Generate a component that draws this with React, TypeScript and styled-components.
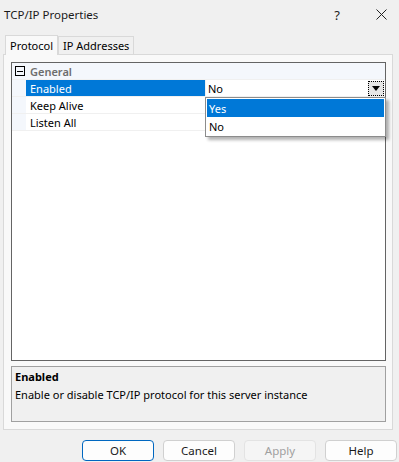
import React from "react";
import styled, { createGlobalStyle } from "styled-components";

const Global = createGlobalStyle`
  html, body { margin: 0; padding: 0; background: #f0f0f0; overflow: hidden; }
  * { box-sizing: border-box; }
  body { font-family: "Noto Sans", "Open Sans", sans-serif; font-size: 11px; color: #000; }
`;

const Window = styled.div`
  width: 399px;
  height: 462px;
  background: #f0f0f0;
  display: flex;
  flex-direction: column;
`;

const TitleBar = styled.div`
  height: 29px;
  display: flex;
  align-items: center;
  padding-left: 4px;
`;

const Title = styled.div`
  flex: 1;
  font-size: 11.5px;
  color: #1a1a1a;
`;

const TitleButton = styled.div<{ $w: number }>`
  width: ${(p) => p.$w}px;
  height: 29px;
  display: flex;
  align-items: center;
  justify-content: center;
  font-size: 13px;
  color: #222;
`;

const TabStrip = styled.div`
  display: flex;
  align-items: flex-end;
  padding-left: 5px;
  height: 25px;
`;

const Tab = styled.div<{ $active?: boolean }>`
  height: ${(p) => (p.$active ? 20 : 18)}px;
  padding: 0 ${(p) => (p.$active ? 4 : 4)}px;
  display: flex;
  align-items: center;
  border: 1px solid #d9d9d9;
  border-bottom: none;
  background: ${(p) => (p.$active ? "#f9f9f9" : "#f0f0f0")};
  margin-bottom: ${(p) => (p.$active ? -1 : 0)}px;
  position: relative;
  z-index: ${(p) => (p.$active ? 1 : 0)};
`;

const Panel = styled.div`
  margin: 0 6px 0 3px;
  height: 376px;
  border: 1px solid #d9d9d9;
  background: #f9f9f9;
  padding: 7px 6px 7px 7px;
  display: flex;
  flex-direction: column;
  gap: 5px;
`;

const Grid = styled.div`
  position: relative;
  height: 300px;
  border: 1px solid #646464;
  background: #fff;
`;

const Row = styled.div`
  display: flex;
  height: 17px;
  border-bottom: 1px solid #f0f0f0;
`;

const Gutter = styled.div`
  width: 14px;
  background: #f4f7fc;
  display: flex;
  align-items: center;
  justify-content: center;
`;

const Expander = styled.div`
  width: 10px;
  height: 10px;
  border: 1px solid #000;
  display: flex;
  align-items: center;
  justify-content: center;
  margin-left: 2px;
  &::after {
    content: "";
    width: 6px;
    height: 1px;
    background: #000;
  }
`;

const Category = styled.div`
  flex: 1;
  background: #f4f7fc;
  color: #6d6d6d;
  font-weight: 600;
  padding-left: 4px;
  display: flex;
  align-items: center;
`;

const Label = styled.div<{ $selected?: boolean }>`
  width: 180px;
  padding-left: 4px;
  display: flex;
  align-items: center;
  background: ${(p) => (p.$selected ? "#0078d7" : "#fff")};
  color: ${(p) => (p.$selected ? "#fff" : "#000")};
  border-right: 1px solid #f0f0f0;
`;

const Value = styled.div`
  flex: 1;
  padding-left: 2px;
  display: flex;
  align-items: center;
  justify-content: space-between;
`;

const DropButton = styled.div`
  width: 16px;
  height: 15px;
  margin-right: 1px;
  border: 1px dotted #000;
  background: #e6e6e6;
  display: flex;
  align-items: center;
  justify-content: center;
  &::after {
    content: "";
    border-left: 4px solid transparent;
    border-right: 4px solid transparent;
    border-top: 5px solid #000;
  }
`;

const DropList = styled.div`
  position: absolute;
  left: 193px;
  top: 34px;
  width: 181px;
  height: 40px;
  background: #fff;
  border: 1px solid #8c8c8c;
  padding: 1px;
  box-shadow: 3px 3px 3px rgba(0, 0, 0, 0.3);
  z-index: 2;
`;

const Option = styled.div<{ $selected?: boolean }>`
  height: 18px;
  padding-left: 2px;
  display: flex;
  align-items: center;
  background: ${(p) => (p.$selected ? "#0078d7" : "#fff")};
  color: ${(p) => (p.$selected ? "#fff" : "#000")};
`;

const Description = styled.div`
  height: 56px;
  border: 1px solid #a0a0a0;
  background: #f0f0f0;
  padding: 2px 3px;
  display: flex;
  flex-direction: column;
  gap: 1px;
`;

const DescTitle = styled.div`
  font-weight: 700;
  line-height: 16px;
`;

const DescText = styled.div`
  line-height: 17px;
`;

const ButtonRow = styled.div`
  display: flex;
  justify-content: flex-end;
  gap: 9px;
  padding: 10px 2px 0 0;
`;

const Button = styled.div<{ $primary?: boolean; $disabled?: boolean }>`
  width: 72px;
  height: 21px;
  border-radius: 4px;
  border: 1px solid ${(p) => (p.$primary ? "#0067c0" : p.$disabled ? "#e3e3e3" : "#d0d0d0")};
  background: ${(p) => (p.$disabled ? "#f5f5f5" : "#fdfdfd")};
  color: ${(p) => (p.$disabled ? "#a0a0a0" : "#1a1a1a")};
  display: flex;
  align-items: center;
  justify-content: center;
  font-size: 11.5px;
`;

export default function App() {
  return (
    <Window>
      <Global />
      <TitleBar>
        <Title>TCP/IP Properties</Title>
        <TitleButton $w={52}>?</TitleButton>
        <TitleButton $w={36}>
          <svg width="11" height="11" viewBox="0 0 11 11">
            <path d="M0.5 0.5 L10.5 10.5 M10.5 0.5 L0.5 10.5" stroke="#222" strokeWidth="1" />
          </svg>
        </TitleButton>
      </TitleBar>
      <TabStrip>
        <Tab $active>Protocol</Tab>
        <Tab>IP Addresses</Tab>
      </TabStrip>
      <Panel>
        <Grid>
          <Row>
            <Gutter>
              <Expander />
            </Gutter>
            <Category>General</Category>
          </Row>
          <Row>
            <Gutter />
            <Label $selected>Enabled</Label>
            <Value>
              No
              <DropButton />
            </Value>
          </Row>
          <Row>
            <Gutter />
            <Label>Keep Alive</Label>
            <Value />
          </Row>
          <Row>
            <Gutter />
            <Label>Listen All</Label>
            <Value />
          </Row>
          <DropList>
            <Option $selected>Yes</Option>
            <Option>No</Option>
          </DropList>
        </Grid>
        <Description>
          <DescTitle>Enabled</DescTitle>
          <DescText>Enable or disable TCP/IP protocol for this server instance</DescText>
        </Description>
      </Panel>
      <ButtonRow>
        <Button $primary>OK</Button>
        <Button>Cancel</Button>
        <Button $disabled>Apply</Button>
        <Button>Help</Button>
      </ButtonRow>
    </Window>
  );
}
